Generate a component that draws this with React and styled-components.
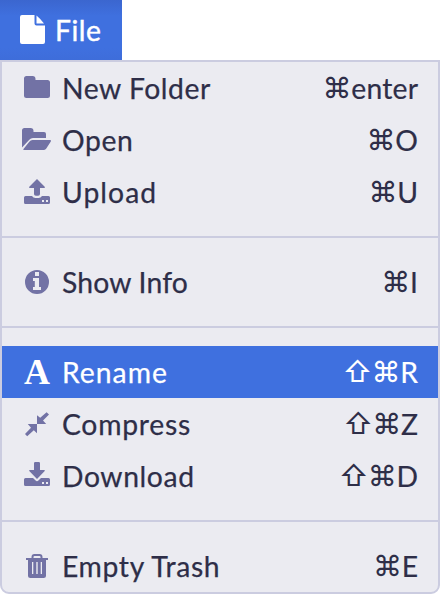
import React from "react";
import styled, { createGlobalStyle } from "styled-components";

const GlobalStyle = createGlobalStyle`
  * { box-sizing: border-box; }
  body { margin: 0; background: #fff; }
`;

const Page = styled.div`
  width: 440px;
  height: 594px;
  overflow: hidden;
  font-family: Lato, "Open Sans", sans-serif;
  font-size: 28.3px;
  color: #2e2e48;
`;

const MenuButton = styled.button`
  display: flex;
  align-items: center;
  width: 122px;
  height: 60px;
  padding: 0 0 0 20px;
  gap: 10px;
  border: 0;
  font: inherit;
  color: #fff;
  background: linear-gradient(#3b66cf 0, #3f70df 16px, #3f70df 48px, #3e6dda 60px);
`;

const MenuTitle = styled.span`
  line-height: 60px;
  letter-spacing: ${(p) => p.$spacing}px;
  -webkit-text-stroke: 0.4px currentColor;
`;

const Menu = styled.div`
  height: 534px;
  border: 2px solid #cbcce0;
  border-radius: 0 0 9px 9px;
  background: #ebebf1;
  overflow: hidden;
`;

const Divider = styled.div`
  height: 2px;
  margin: 18px 0;
  background: #cbcce0;
`;

const Row = styled.div`
  display: flex;
  align-items: center;
  height: 52px;
  padding: 0 20px 0 18px;
  color: ${(p) => (p.$active ? "#fff" : "#2e2e48")};
  background: ${(p) => (p.$active ? "#3f70df" : "transparent")};
`;

const Icon = styled.svg`
  display: block;
  flex: none;
  width: 34px;
  height: 32px;
  color: #7272a5;
`;

const LetterIcon = styled.span`
  width: 34px;
  padding-left: 4px;
  font: bold 36px/52px "Liberation Serif", serif;
`;

const Label = styled.span`
  margin-left: 8px;
  line-height: 52px;
  white-space: nowrap;
  letter-spacing: ${(p) => p.$spacing}px;
  -webkit-text-stroke: 0.25px currentColor;
`;

const Shortcut = styled.span`
  display: flex;
  align-items: center;
  margin-left: auto;
  line-height: 52px;
`;

const Keys = styled.span`
  margin-right: ${(p) => -p.$spacing}px;
  letter-spacing: ${(p) => p.$spacing}px;
  -webkit-text-stroke: 0.2px currentColor;
`;

const Modifier = styled.span`
  display: flex;
  justify-content: center;
  width: 28.5px;
  font-family: Inter, "DejaVu Sans", sans-serif;
  font-size: 29px;
`;

const FileIcon = () => (
  <svg width="25" height="30" viewBox="0 0 25 30" fill="currentColor">
    <path d="M2 0H14.5V8.5Q14.5 10.5 16.5 10.5H25V27Q25 29 23 29H2Q0 29 0 27V2Q0 0 2 0ZM16.5 .6Q20 3.5 24 8.6H16.5Z" />
  </svg>
);

const drawings = {
  folder: (
    <path d="M6.5 4H12.5Q15.5 4 15.5 7V8H27.5Q30 8 30 10.5V23.5Q30 26 27.5 26H6.5Q4 26 4 23.5V6.5Q4 4 6.5 4Z" />
  ),
  open: (
    <>
      <path d="M4.5 4H10.5Q13.5 4 13.5 7V8H24Q26 8 26 10V14H13Q10.8 14 9.3 15.8L2 23.5V6.5Q2 4 4.5 4Z" />
      <path d="M12.5 16H30Q31.8 16 30.8 17.6L26.3 24.4Q25.2 26 23.3 26H4Q2.7 26 3.5 24.9L9.3 17.7Q10.6 16 12.5 16Z" />
    </>
  ),
  upload: (
    <>
      <path d="M17 3L24.7 10.8Q25.6 12 24 12H20V18Q20 19.8 18.2 19.8H15.8Q14 19.8 14 18V12H10Q8.4 12 9.3 10.8Z" />
      <path fillRule="evenodd" d="M5.5 20H12Q13.2 22 15.5 22H18.5Q20.8 22 22 20H28.5Q30 20 30 21.5V26.5Q30 28 28.5 28H5.5Q4 28 4 26.5V21.5Q4 20 5.5 20ZM22 24V26H24V24ZM26 24V26H28V24Z" />
    </>
  ),
  info: (
    <path fillRule="evenodd" d="M17 4A12 12 0 1 1 17 28A12 12 0 1 1 17 4ZM15 6V10H19V6ZM13 12V15H14.8V21H13V24H21V21H19V12Z" />
  ),
  compress: (
    <path d="M17 7.2L20.2 9.8L26.6 4.2L29 6.5L23 12.6L26.2 16H17ZM17 16V25.2L13.8 22.2L7.2 28.2L5 26L11 19.8L7.8 16Z" />
  ),
  download: (
    <>
      <path d="M15.2 2H18.8Q20 2 20 3.2V10H24Q25.6 10 24.5 11.2L17 19L9.5 11.2Q8.4 10 10 10H14V3.2Q14 2 15.2 2Z" />
      <path fillRule="evenodd" d="M5.5 18H13L15.6 20.6Q17 22 18.4 20.6L21 18H28.5Q30 18 30 19.5V24.5Q30 26 28.5 26H5.5Q4 26 4 24.5V19.5Q4 18 5.5 18ZM22 22V24H24V22ZM26 22V24H28V22Z" />
    </>
  ),
  trash: (
    <path fillRule="evenodd" d="M6 8H11.5V7Q11.5 4 14.5 4H19.5Q22.5 4 22.5 7V8H28V10H26V25.5Q26 28 23.5 28H10.5Q8 28 8 25.5V10H6ZM13.5 8H20.5V7Q20.5 6 19.5 6H14.5Q13.5 6 13.5 7ZM12 12V24H13.3V12ZM16.3 12V24H17.7V12ZM20.7 12V24H22V12Z" />
  ),
};

const groups = [
  [
    { icon: "folder", label: "New Folder", spacing: 0.53, modifiers: "⌘", keys: "enter", keySpacing: 0.2 },
    { icon: "open", label: "Open", spacing: 0.65, modifiers: "⌘", keys: "O" },
    { icon: "upload", label: "Upload", spacing: 1.05, modifiers: "⌘", keys: "U" },
  ],
  [{ icon: "info", label: "Show Info", spacing: 0.18, modifiers: "⌘", keys: "I" }],
  [
    { letter: "A", label: "Rename", spacing: 1.02, modifiers: "⇧⌘", keys: "R", active: true },
    { icon: "compress", label: "Compress", spacing: 0.75, modifiers: "⇧⌘", keys: "Z" },
    { icon: "download", label: "Download", spacing: 0.6, modifiers: "⇧⌘", keys: "D" },
  ],
  [{ icon: "trash", label: "Empty Trash", spacing: 0.65, modifiers: "⌘", keys: "E" }],
];

function MenuItem({ item }) {
  return (
    <Row $active={item.active}>
      {item.letter ? (
        <LetterIcon>{item.letter}</LetterIcon>
      ) : (
        <Icon viewBox="0 0 34 32" fill="currentColor">
          {drawings[item.icon]}
        </Icon>
      )}
      <Label $spacing={item.spacing}>{item.label}</Label>
      <Shortcut>
        {[...item.modifiers].map((symbol) => (
          <Modifier key={symbol}>{symbol}</Modifier>
        ))}
        <Keys $spacing={item.keySpacing ?? 0}>{item.keys}</Keys>
      </Shortcut>
    </Row>
  );
}

export default function App() {
  return (
    <Page>
      <GlobalStyle />
      <MenuButton>
        <FileIcon />
        <MenuTitle $spacing={0.5}>File</MenuTitle>
      </MenuButton>
      <Menu>
        {groups.map((items, index) => (
          <React.Fragment key={index}>
            {index > 0 && <Divider />}
            {items.map((item) => (
              <MenuItem key={item.label} item={item} />
            ))}
          </React.Fragment>
        ))}
      </Menu>
    </Page>
  );
}
